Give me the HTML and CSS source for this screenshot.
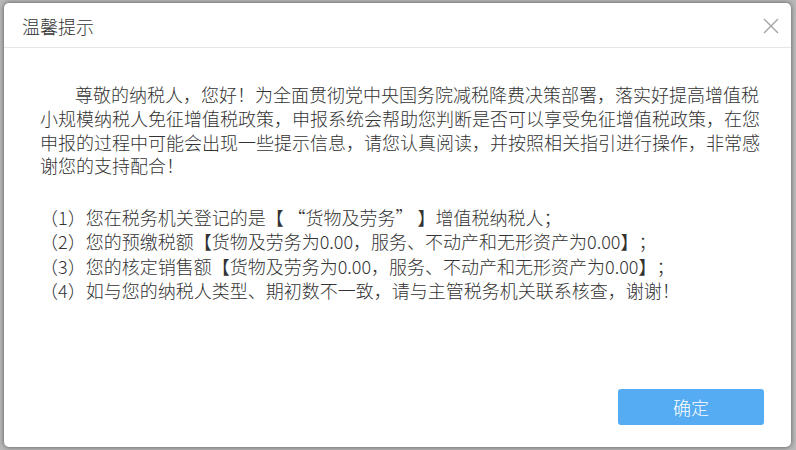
FILE: index.html
```html
<!DOCTYPE html>
<html lang="zh-CN">
<head>
<meta charset="utf-8">
<title>温馨提示</title>
<link rel="stylesheet" href="styles.css">
</head>
<body>
<div class="dialog">
  <div class="dialog-header">
    <span class="dialog-title">温馨提示</span>
    <span class="dialog-close" aria-label="关闭">
      <svg width="16" height="16" viewBox="0 0 16 16"><path d="M1 1L15 15M15 1L1 15" stroke="#a3a3a3" stroke-width="1.4" fill="none"/></svg>
    </span>
  </div>
  <div class="dialog-body">
    <p class="intro">尊敬的纳税人，您好！为全面贯彻党中央国务院减税降费决策部署，落实好提高增值税小规模纳税人免征增值税政策，申报系统会帮助您判断是否可以享受免征增值税政策，在您申报的过程中可能会出现一些提示信息，请您认真阅读，并按照相关指引进行操作，非常感谢您的支持配合！</p>
    <ul class="items">
      <li>（1）您在税务机关登记的是【 “货物及劳务” 】增值税纳税人；</li>
      <li>（2）您的预缴税额【货物及劳务为0.00，服务、不动产和无形资产为0.00】；</li>
      <li>（3）您的核定销售额【货物及劳务为0.00，服务、不动产和无形资产为0.00】；</li>
      <li>（4）如与您的纳税人类型、期初数不一致，请与主管税务机关联系核查，谢谢！</li>
    </ul>
  </div>
  <div class="dialog-footer">
    <button class="btn-primary">确定</button>
  </div>
</div>
</body>
</html>
```
FILE: styles.css
```css
html, body {
  margin: 0;
  padding: 0;
  height: 100%;
}
body {
  background: #b9b9b9;
  font-family: "Noto Sans CJK SC", "Noto Sans", sans-serif;
  color: #333;
  padding: 3px 5px 3px 4px;
  box-sizing: border-box;
  text-spacing-trim: space-all;
}
.dialog {
  height: 444px;
  background: #fff;
  border-radius: 5px;
  box-shadow: 0 0 5px rgba(0,0,0,0.55);
  display: flex;
  flex-direction: column;
}
.dialog-header {
  height: 44px;
  border-bottom: 1px solid #e6e6e6;
  display: flex;
  align-items: center;
  justify-content: space-between;
  padding: 0 12px 0 18px;
}
.dialog-title {
  font-size: 18px;
  font-weight: 300;
  color: #333;
  line-height: 24px;
  margin-top: 1px;
}
.dialog-close {
  width: 16px;
  height: 16px;
  display: flex;
  margin-top: 2px;
}
.dialog-body {
  flex: 1;
  padding: 35px 31px 0 36px;
  font-size: 18px;
  font-weight: 300;
  line-height: 23.8px;
}
.intro {
  margin: 0;
  text-indent: 35px;
}
.items {
  list-style: none;
  margin: 27px 0 0;
  padding: 0;
}
.items li {
  line-height: 24.3px;
}
.dialog-footer {
  display: flex;
  justify-content: flex-end;
  padding: 0 27px 22px 0;
}
.btn-primary {
  width: 146px;
  height: 36px;
  border: none;
  border-radius: 3px;
  background: #55acf2;
  color: #fff;
  font-family: "Noto Sans CJK SC", sans-serif;
  font-size: 18px;
  font-weight: 300;
  padding: 0;
}
```
